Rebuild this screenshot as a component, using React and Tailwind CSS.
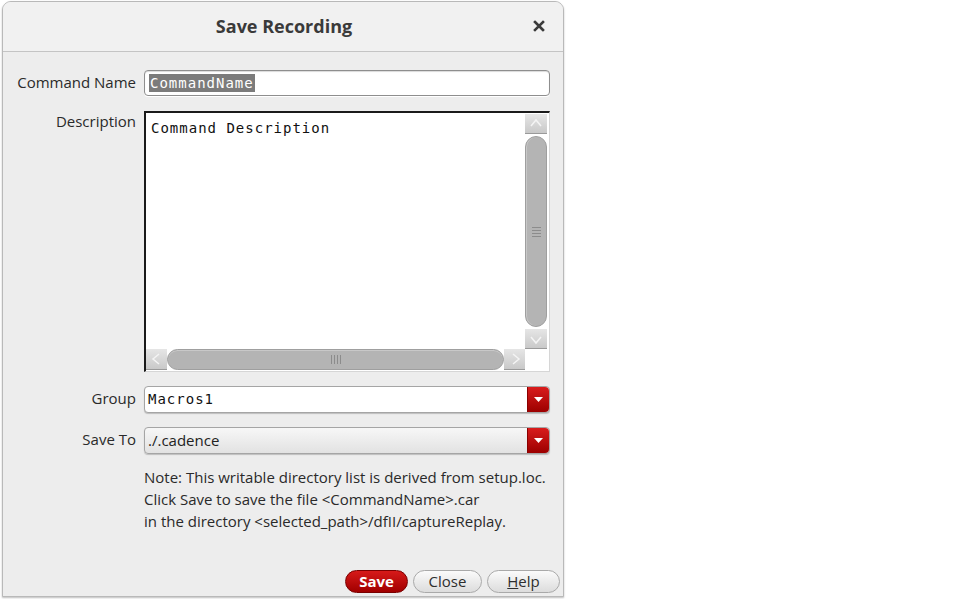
import React from "react";

const ui = { fontFamily: '"Open Sans", "DejaVu Sans", sans-serif' };
const mono = { fontFamily: '"DejaVu Sans Mono", "Liberation Mono", monospace' };

const Caret = () => (
  <div className="w-[22px] self-stretch flex items-center justify-center rounded-r-[4px] bg-gradient-to-b from-[#d91c1c] to-[#9c0000] border-l border-[#8a0000]">
    <svg width="9" height="5" viewBox="0 0 9 5">
      <path d="M0 0 H9 L4.5 5 Z" fill="#fff" />
    </svg>
  </div>
);

const ScrollBtn = ({ dir, className }) => {
  const paths = {
    up: "M3 10 L8 4 L13 10",
    down: "M3 6 L8 12 L13 6",
    left: "M10 3 L4 8 L10 13",
    right: "M6 3 L12 8 L6 13",
  };
  return (
    <div
      className={
        "flex items-center justify-center bg-gradient-to-b from-[#e6e6e6] to-[#c9c9c9] border-[#9a9a9a] " +
        className
      }
    >
      <svg width="16" height="16" viewBox="0 0 16 16">
        <path d={paths[dir]} fill="none" stroke="#f4f4f4" strokeWidth="1.5" />
      </svg>
    </div>
  );
};

const Row = ({ label, children, top }) => (
  <div className={"flex " + (top ? "items-start" : "items-center")}>
    <div className={"w-[141px] pr-[8px] text-right text-[15px] text-[#2a2a2a] " + (top ? "mt-[-1px]" : "mt-[-2px]")}>
      {label}
    </div>
    <div className="flex-1">{children}</div>
  </div>
);

export default function App() {
  return (
    <div className="w-[963px] h-[599px] bg-white" style={ui}>
      <div className="ml-[2px] mt-[1px] w-[562px] h-[596px] flex flex-col rounded-t-[9px] border border-[#b9b9b9] bg-[#ededed] shadow-[0_1px_2px_rgba(0,0,0,0.25)] overflow-hidden">
        {/* title bar */}
        <div className="h-[50px] shrink-0 flex items-center relative bg-[#f1f1f1] border-b border-[#c4c4c4]">
          <div className="flex-1 text-center text-[18px] font-bold text-[#3a3a3a] pl-[2px]">
            Save Recording
          </div>
          <div className="absolute right-[18px] top-[18px]">
            <svg width="12" height="12" viewBox="0 0 12 12">
              <path d="M2 2 L10 10 M10 2 L2 10" stroke="#3b3b3b" strokeWidth="2.6" strokeLinecap="square" />
            </svg>
          </div>
        </div>

        {/* form */}
        <div className="flex-1 flex flex-col pr-[13px] pt-[18px]">
          <Row label="Command Name">
            <div className="h-[26px] flex items-center rounded-[4px] border border-[#8e8e8e] bg-white shadow-[inset_0_1px_1px_rgba(0,0,0,0.15),0_1px_0_#fff] px-[4px]">
              <span className="bg-[#7b7b7b] text-white text-[14px] tracking-[1px] leading-[18px] px-[1px]" style={mono}>
                CommandName
              </span>
            </div>
          </Row>

          <div className="mt-[15px]">
            <Row label="Description" top>
              <div className="h-[261px] flex flex-col bg-white border-t-2 border-l-2 border-[#1a1a1a] border-r border-b border-r-[#d6d6d6] border-b-[#d6d6d6]">
                <div className="flex-1 flex min-h-0">
                  <div className="flex-1 pl-[5px] pt-[5px] text-[14px] tracking-[1px] text-[#111]" style={mono}>
                    Command Description
                  </div>
                  <div className="w-[22px] mr-[2px] mt-[1px] flex flex-col">
                    <ScrollBtn dir="up" className="h-[20px] border-b" />
                    <div className="flex-1 flex items-center justify-center bg-[#b4b4b4] rounded-full border border-[#9f9f9f] my-[2px] shadow-[inset_1px_0_0_#c8c8c8]">
                      <div className="flex flex-col gap-[2px]">
                        <div className="w-[9px] h-px bg-[#8c8c8c]" />
                        <div className="w-[9px] h-px bg-[#8c8c8c]" />
                        <div className="w-[9px] h-px bg-[#8c8c8c]" />
                        <div className="w-[9px] h-px bg-[#8c8c8c]" />
                      </div>
                    </div>
                    <ScrollBtn dir="down" className="h-[20px] border-b" />
                  </div>
                </div>
                <div className="h-[21px] flex mb-[1px]">
                  <div className="flex-1 flex">
                    <ScrollBtn dir="left" className="w-[21px] border-b" />
                    <div className="flex-1 flex items-center justify-center bg-[#b4b4b4] rounded-full border border-[#9f9f9f] shadow-[inset_0_1px_0_#c8c8c8]">
                      <div className="flex gap-[2px]">
                        <div className="w-px h-[9px] bg-[#8c8c8c]" />
                        <div className="w-px h-[9px] bg-[#8c8c8c]" />
                        <div className="w-px h-[9px] bg-[#8c8c8c]" />
                        <div className="w-px h-[9px] bg-[#8c8c8c]" />
                      </div>
                    </div>
                    <ScrollBtn dir="right" className="w-[21px] border-b" />
                  </div>
                  <div className="w-[24px] bg-white" />
                </div>
              </div>
            </Row>
          </div>

          <div className="mt-[14px]">
            <Row label="Group">
              <div className="h-[27px] flex items-center rounded-[4px] border border-[#a5a5a5] bg-white shadow-[0_1px_1px_rgba(0,0,0,0.2)]">
                <div className="flex-1 pl-[3px] text-[14px] tracking-[1px] text-[#111]" style={mono}>
                  Macros1
                </div>
                <Caret />
              </div>
            </Row>
          </div>

          <div className="mt-[14px]">
            <Row label="Save To">
              <div className="h-[27px] flex items-center rounded-[4px] border border-[#a5a5a5] bg-gradient-to-b from-[#f7f7f7] to-[#e2e2e2] shadow-[0_1px_1px_rgba(0,0,0,0.2)]">
                <div className="flex-1 pl-[3px] text-[15px] text-[#222]">./.cadence</div>
                <Caret />
              </div>
            </Row>
          </div>

          <div className="pl-[141px] mt-[12px] text-[15px] leading-[22px] text-[#2a2a2a] whitespace-nowrap">
            <div>Note: This writable directory list is derived from setup.loc.</div>
            <div>Click Save to save the file &lt;CommandName&gt;.car</div>
            <div>in the directory &lt;selected_path&gt;/dfII/captureReplay.</div>
          </div>

          <div className="flex-1" />

          <div className="flex justify-end gap-[5px] mr-[-10px] mb-[3px]">
            <button className="w-[63px] h-[23px] rounded-full border border-[#7a0000] bg-gradient-to-b from-[#d71919] to-[#a10000] text-white text-[15px] font-bold leading-none">
              Save
            </button>
            <button className="w-[69px] h-[23px] rounded-full border border-[#a9a9a9] bg-gradient-to-b from-[#fbfbfb] to-[#dcdcdc] text-[#2e2e2e] text-[15px] leading-none">
              Close
            </button>
            <button className="w-[73px] h-[23px] rounded-full border border-[#a9a9a9] bg-gradient-to-b from-[#fbfbfb] to-[#dcdcdc] text-[#2e2e2e] text-[15px] leading-none">
              <span className="underline">H</span>elp
            </button>
          </div>
        </div>
      </div>
    </div>
  );
}
